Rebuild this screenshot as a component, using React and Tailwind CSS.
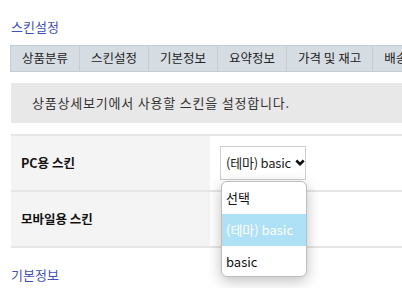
import React from "react";

const tabs = ["상품분류", "스킨설정", "기본정보", "요약정보", "가격 및 재고", "배송정보"];

export default function App() {
  return (
    <div
      className="w-[402px] h-[288px] overflow-hidden bg-white relative"
      style={{ fontFamily: '"Noto Sans CJK KR", "Noto Sans", sans-serif' }}
    >
      <div className="w-[560px] pl-[10px]">
        <div className="pt-[17px] pl-[1px] h-[45px] text-[13px] leading-[19px] text-[#3f4fbf]">스킨설정</div>
        <div className="flex h-[27px] border border-[#c6cdd2] bg-[#d6dde2]">
          {tabs.map((t, i) => (
            <div
              key={i}
              className="flex items-center px-[11px] border-r border-[#c6cdd2] text-[12.5px] text-[#222] whitespace-nowrap"
            >
              {t}
            </div>
          ))}
        </div>
        <div className="mt-[11px] ml-[1px] h-[40px] bg-[#e8e8e8] flex items-center pl-[21px] text-[13px] tracking-[0.8px] text-[#333] whitespace-nowrap">
          상품상세보기에서 사용할 스킨을 설정합니다.
        </div>
        <div className="mt-[11px] ml-[1px] border-t-2 border-[#e6e6e6]">
          <div className="flex h-[56px] border-b-2 border-[#e6e6e6]">
            <div className="w-[199px] bg-[#f4f4f4] flex items-center pl-[10px] text-[12.5px] font-bold text-[#111]">PC용 스킨</div>
            <div className="flex items-center pl-[10px]">
              <div className="w-[86px] h-[34px] border border-[#cfcfcf] bg-white flex items-center pl-[5px] text-[13px] text-[#222] gap-[4px] whitespace-nowrap">
                <span className="tracking-[-0.2px]">(테마) basic</span>
                <svg width="10" height="8" viewBox="0 0 10 8" className="shrink-0">
                  <path d="M1.3 1.5 L5 5.2 L8.7 1.5" fill="none" stroke="#111" strokeWidth="2.6" />
                </svg>
              </div>
            </div>
          </div>
          <div className="flex h-[56px] border-b-2 border-[#e6e6e6]">
            <div className="w-[199px] bg-[#f4f4f4] flex items-center pl-[10px] text-[12.5px] font-bold text-[#111]">모바일용 스킨</div>
            <div />
          </div>
        </div>
        <div className="pt-[17px] pl-[1px] text-[13px] leading-[19px] text-[#3f4fbf]">기본정보</div>
      </div>
      <div className="absolute left-[221px] top-[181px] w-[86px] h-[96px] rounded-[6px] border border-[#bdbdbd] bg-white overflow-hidden shadow-[0_4px_14px_rgba(0,0,0,0.25)] text-[13px] whitespace-nowrap">
        <div className="h-[32px] flex items-center pl-[4px] text-[#111]">선택</div>
        <div className="h-[32px] flex items-center pl-[4px] bg-[#aee0f6] text-white">(테마) basic</div>
        <div className="h-[31px] flex items-center pl-[4px] text-[#111]">basic</div>
      </div>
    </div>
  );
}
